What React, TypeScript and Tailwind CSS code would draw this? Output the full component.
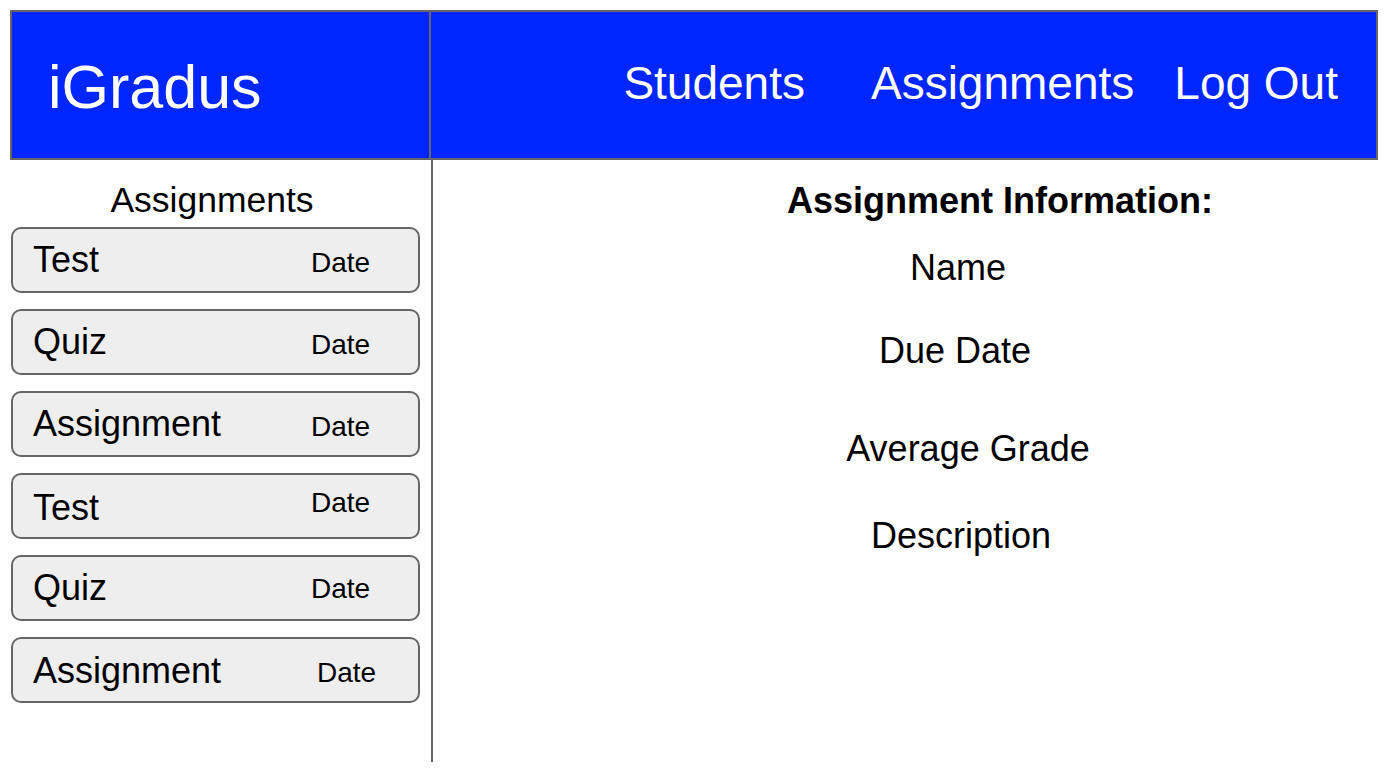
import React from 'react';

type Item = { name: string; nameMt: string; dateMt: string; dateMl: string };

const ITEMS: Item[] = [
  { name: 'Test', nameMt: 'mt-[10px]', dateMt: 'mt-[18px]', dateMl: 'ml-0' },
  { name: 'Quiz', nameMt: 'mt-[10px]', dateMt: 'mt-[18px]', dateMl: 'ml-0' },
  { name: 'Assignment', nameMt: 'mt-[10px]', dateMt: 'mt-[18px]', dateMl: 'ml-0' },
  { name: 'Test', nameMt: 'mt-[12px]', dateMt: 'mt-[12px]', dateMl: 'ml-0' },
  { name: 'Quiz', nameMt: 'mt-[10px]', dateMt: 'mt-[16px]', dateMl: 'ml-0' },
  { name: 'Assignment', nameMt: 'mt-[11px]', dateMt: 'mt-[18px]', dateMl: 'ml-[6px]' },
];

function AssignmentCard({ item }: { item: Item }) {
  return (
    <div className="flex items-start h-[66px] w-[409px] ml-[1px] rounded-[10px] border-2 border-[#666666] bg-[#eeeeee] pl-[20px]">
      <span className={`w-[278px] text-[36px] text-black ${item.nameMt}`}>{item.name}</span>
      <span className={`text-[28px] text-black ${item.dateMt} ${item.dateMl}`}>Date</span>
    </div>
  );
}

export default function App() {
  return (
    <div className="min-h-screen bg-white pl-[10px] pt-[10px] font-['Liberation_Sans',Arial,sans-serif] leading-[1.15] text-black">
      <div className="w-[1368px]">
        {/* Header */}
        <header className="flex h-[150px] border-2 border-[#666666] bg-[#0026ff] text-white">
          <div className="flex items-center w-[419px] border-r-2 border-[#666666] pl-[36px]">
            <span className="text-[61px] mt-[4px]">iGradus</span>
          </div>
          <nav className="flex flex-1 items-center justify-end pr-[38px] text-[46px]">
            <span className="mb-[4px]">Students</span>
            <span className="mb-[4px] ml-[66px]">Assignments</span>
            <span className="mb-[4px] ml-[40px]">Log Out</span>
          </nav>
        </header>

        {/* Body */}
        <div className="flex h-[602px]">
          <aside className="w-[423px] shrink-0 border-r-2 border-[#666666]">
            <h2 className="ml-[1px] w-[409px] pr-[7px] mt-[20px] text-center text-[35.5px] font-normal">Assignments</h2>
            <div className="mt-[6px] flex flex-col gap-[16px]">
              {ITEMS.map((item, i) => (
                <AssignmentCard key={i} item={item} />
              ))}
            </div>
          </aside>

          <main className="flex flex-1 flex-col items-center pl-[105px] text-[36px]">
            <h1 className="mt-[20px] ml-[84px] text-[36px] font-bold">Assignment Information:</h1>
            <p className="mt-[26px]">Name</p>
            <p className="mt-[41px] mr-[6px]">Due Date</p>
            <p className="mt-[57px] ml-[20px]">Average Grade</p>
            <p className="mt-[45px] ml-[6px]">Description</p>
          </main>
        </div>
      </div>
    </div>
  );
}
